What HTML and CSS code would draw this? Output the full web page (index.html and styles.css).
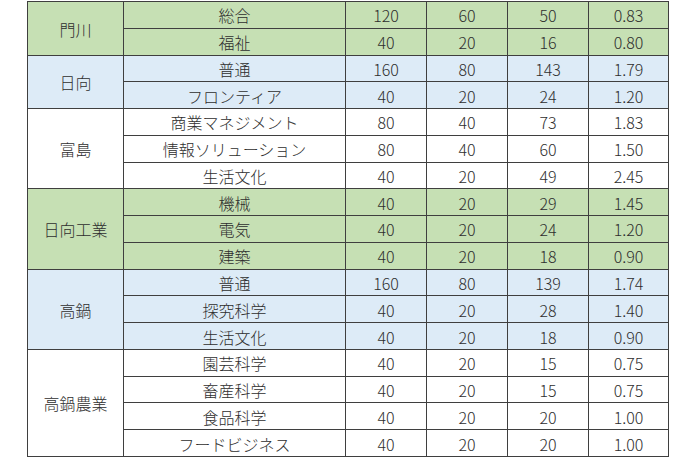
FILE: index.html
```html
<!DOCTYPE html>
<html lang="ja">
<head>
<meta charset="utf-8">
<link rel="stylesheet" href="styles.css">
</head>
<body>
<div class="grid">
  <div class="c g school r2">門川</div>
  <div class="c g">総合</div><div class="c g">120</div><div class="c g">60</div><div class="c g">50</div><div class="c g">0.83</div>
  <div class="c g">福祉</div><div class="c g">40</div><div class="c g">20</div><div class="c g">16</div><div class="c g">0.80</div>

  <div class="c b school r2">日向</div>
  <div class="c b">普通</div><div class="c b">160</div><div class="c b">80</div><div class="c b">143</div><div class="c b">1.79</div>
  <div class="c b">フロンティア</div><div class="c b">40</div><div class="c b">20</div><div class="c b">24</div><div class="c b">1.20</div>

  <div class="c w school r3">富島</div>
  <div class="c w">商業マネジメント</div><div class="c w">80</div><div class="c w">40</div><div class="c w">73</div><div class="c w">1.83</div>
  <div class="c w">情報ソリューション</div><div class="c w">80</div><div class="c w">40</div><div class="c w">60</div><div class="c w">1.50</div>
  <div class="c w">生活文化</div><div class="c w">40</div><div class="c w">20</div><div class="c w">49</div><div class="c w">2.45</div>

  <div class="c g school r3">日向工業</div>
  <div class="c g">機械</div><div class="c g">40</div><div class="c g">20</div><div class="c g">29</div><div class="c g">1.45</div>
  <div class="c g">電気</div><div class="c g">40</div><div class="c g">20</div><div class="c g">24</div><div class="c g">1.20</div>
  <div class="c g">建築</div><div class="c g">40</div><div class="c g">20</div><div class="c g">18</div><div class="c g">0.90</div>

  <div class="c b school r3">高鍋</div>
  <div class="c b">普通</div><div class="c b">160</div><div class="c b">80</div><div class="c b">139</div><div class="c b">1.74</div>
  <div class="c b">探究科学</div><div class="c b">40</div><div class="c b">20</div><div class="c b">28</div><div class="c b">1.40</div>
  <div class="c b">生活文化</div><div class="c b">40</div><div class="c b">20</div><div class="c b">18</div><div class="c b">0.90</div>

  <div class="c w school r4">高鍋農業</div>
  <div class="c w">園芸科学</div><div class="c w">40</div><div class="c w">20</div><div class="c w">15</div><div class="c w">0.75</div>
  <div class="c w">畜産科学</div><div class="c w">40</div><div class="c w">20</div><div class="c w">15</div><div class="c w">0.75</div>
  <div class="c w">食品科学</div><div class="c w">40</div><div class="c w">20</div><div class="c w">20</div><div class="c w">1.00</div>
  <div class="c w">フードビジネス</div><div class="c w">40</div><div class="c w">20</div><div class="c w">20</div><div class="c w">1.00</div>
</div>
</body>
</html>
```

FILE: styles.css
```css
html, body {
  margin: 0;
  padding: 0;
  background: #fff;
}
body {
  padding: 1px 0 0 27px;
}
.grid {
  display: grid;
  grid-template-columns: 95px 221px 80px 80px 80px 79px;
  grid-template-rows: repeat(17, 1fr);
  width: 642px;
  height: 456px;
  box-sizing: border-box;
  padding: 1px;
  gap: 1px;
  background: #3f3f3f;
  font-family: "Noto Sans CJK JP", "Noto Sans", sans-serif;
  font-weight: 300;
  font-size: 16px;
  color: #2e2e2e;
}
.c {
  display: flex;
  align-items: center;
  justify-content: center;
  line-height: 1;
  padding-top: 1px;
}
.school { grid-column: 1; }
.r2 { grid-row: span 2; }
.r3 { grid-row: span 3; }
.r4 { grid-row: span 4; }
.g { background: #c6e0b4; }
.b { background: #ddebf7; }
.w { background: #fff; }
```
